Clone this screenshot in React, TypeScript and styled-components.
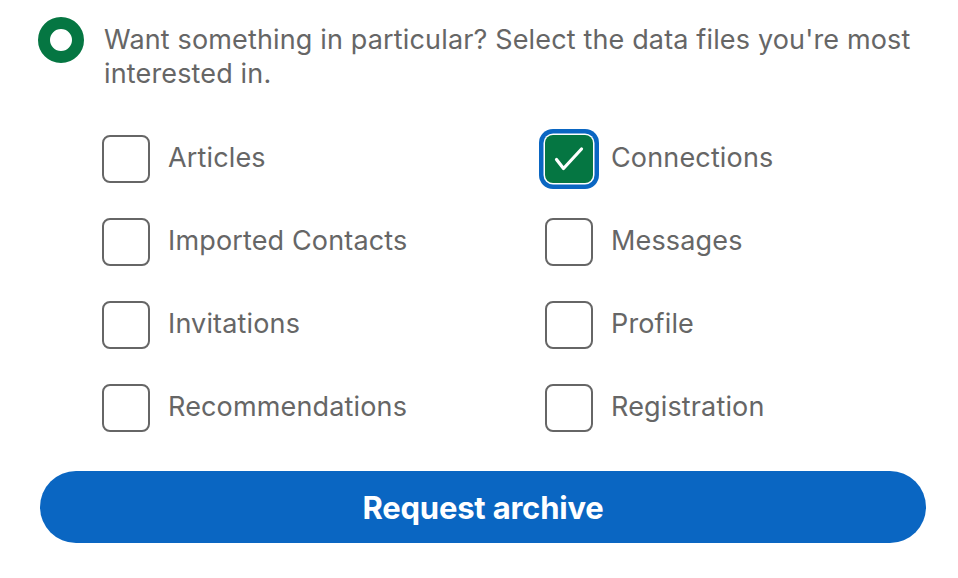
import styled, { createGlobalStyle } from 'styled-components';

const GlobalStyle = createGlobalStyle`
  html, body {
    margin: 0;
    padding: 0;
    background: #fff;
  }
  body {
    font-family: Inter, "Noto Sans", "Liberation Sans", sans-serif;
    -webkit-font-smoothing: antialiased;
  }
`;

const Page = styled.div`
  width: 958px;
  box-sizing: border-box;
  padding: 17px 32px 0 38px;
`;

const Question = styled.div`
  display: flex;
  align-items: flex-start;
  column-gap: 20px;
`;

const RadioRing = styled.span`
  flex: none;
  box-sizing: border-box;
  width: 46px;
  height: 46px;
  border-radius: 50%;
  border: 12px solid #057642;
  background: #fff;
`;

const Prompt = styled.p`
  margin: 6px 0 0;
  font-size: 27px;
  line-height: 34px;
  color: #666;
  letter-spacing: 0.15px;
`;

const Options = styled.div`
  display: grid;
  grid-template-columns: 443px 1fr;
  row-gap: 35px;
  margin: 44px 0 0 64px;
`;

const Option = styled.label`
  display: flex;
  align-items: center;
  column-gap: 18px;
  font-size: 27px;
  letter-spacing: 0.15px;
  color: #666;
  cursor: pointer;
`;

const OptionText = styled.span`
  margin-bottom: 3px;
`;

const Box = styled.span<{ $checked?: boolean }>`
  flex: none;
  box-sizing: border-box;
  width: 48px;
  height: 48px;
  border-radius: 8px;
  display: flex;
  align-items: center;
  justify-content: center;
  border: ${(p) => (p.$checked ? 'none' : '2px solid #666')};
  background: ${(p) => (p.$checked ? '#057642' : '#fff')};
  box-shadow: ${(p) =>
    p.$checked ? '0 0 0 1.5px #fff, 0 0 0 6px #0a66c2' : 'none'};
`;

const RequestButton = styled.button`
  display: block;
  width: 886px;
  height: 72px;
  margin: 39px 0 0 2px;
  border: none;
  border-radius: 36px;
  background: #0a66c2;
  color: #fff;
  font-family: inherit;
  font-size: 31px;
  font-weight: 700;
  letter-spacing: -0.2px;
  cursor: pointer;
`;

const files = [
  { name: 'Articles', checked: false },
  { name: 'Connections', checked: true },
  { name: 'Imported Contacts', checked: false },
  { name: 'Messages', checked: false },
  { name: 'Invitations', checked: false },
  { name: 'Profile', checked: false },
  { name: 'Recommendations', checked: false },
  { name: 'Registration', checked: false },
];

function CheckMark() {
  return (
    <svg width="30" height="26" viewBox="0 0 30 26" fill="none">
      <path
        d="M2.5 13.5 L9.5 22.5 L27.5 3"
        stroke="#fff"
        strokeWidth="3.2"
        strokeLinecap="round"
        strokeLinejoin="round"
      />
    </svg>
  );
}

export default function App() {
  return (
    <Page>
      <GlobalStyle />
      <Question>
        <RadioRing />
        <Prompt>
          Want something in particular? Select the data files you're most
          interested in.
        </Prompt>
      </Question>
      <Options>
        {files.map((f) => (
          <Option key={f.name}>
            <Box $checked={f.checked}>{f.checked && <CheckMark />}</Box>
            <OptionText>{f.name}</OptionText>
          </Option>
        ))}
      </Options>
      <RequestButton>Request archive</RequestButton>
    </Page>
  );
}
